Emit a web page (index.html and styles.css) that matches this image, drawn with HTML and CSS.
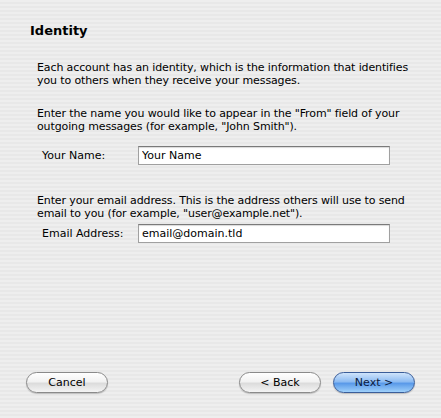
FILE: index.html
```html
<!DOCTYPE html>
<html lang="en">
<head>
    <meta charset="UTF-8">
    <title>Identity</title>
    <link rel="stylesheet" href="styles.css">
</head>
<body>

    <div class="wizard">

        <!-- Page Title -->
        <h1>Identity</h1>

        <!-- Page Content -->
        <div class="content">
            <p>Each account has an identity, which is the information that identifies you to others when they receive your messages.</p>

            <p>Enter the name you would like to appear in the "From" field of your outgoing messages (for example, "John Smith").</p>
            <div class="field-row">
                <label for="name">Your Name:</label>
                <input type="text" id="name" value="Your Name">
            </div>

            <p>Enter your email address. This is the address others will use to send email to you (for example, "user@example.net").</p>
            <div class="field-row field-row-tight">
                <label for="email">Email Address:</label>
                <input type="text" id="email" value="email@domain.tld">
            </div>
        </div>

        <!-- Wizard Buttons -->
        <div class="buttons">
            <button class="button">Cancel</button>
            <div class="button-group">
                <button class="button">&lt; Back</button>
                <button class="button button-default">Next &gt;</button>
            </div>
        </div>

    </div>

</body>
</html>
```

FILE: styles.css
```css
/* --- Base --- */
body {
    margin: 0;
    font-family: 'DejaVu Sans', sans-serif;
    font-size: 11px;
    color: #000;
    background-color: #ececec;
    background-image: repeating-linear-gradient(to bottom, #eeeeee 0, #eeeeee 2px, #e8e8e8 2px, #e8e8e8 4px);
}

/* --- Wizard Frame --- */
.wizard {
    height: 418px;
    display: flex;
    flex-direction: column;
    box-sizing: border-box;
    padding: 23px 26px 25px 30px;
}

h1 {
    font-size: 13px;
    font-weight: bold;
    margin: 0;
    line-height: 16px;
}

.content {
    padding: 22px 0 0 7px;
}

.content p {
    margin: 0 0 20px 0;
    line-height: 13px;
    letter-spacing: -0.12px;
}

/* --- Form Rows --- */
.field-row {
    display: flex;
    align-items: center;
    padding-left: 5px;
    margin: -7px 0 29px 0;
}

.field-row-tight {
    margin-top: -16px;
}

.field-row label {
    width: 96px;
}

.field-row input {
    width: 252px;
    height: 19px;
    box-sizing: border-box;
    font-family: inherit;
    font-size: 11px;
    padding: 0 3px;
    border: 1px solid #a0a0a0;
    border-top-color: #7a7a7a;
    background: #fff;
    box-shadow: inset 0 1px 1px rgb(0 0 0 / 0.15);
}

/* --- Buttons --- */
.buttons {
    margin-top: auto;
    display: flex;
    justify-content: space-between;
    margin-left: -4px;
}

.button-group {
    display: flex;
    gap: 12px;
}

.button {
    width: 82px;
    height: 21px;
    font-family: inherit;
    font-size: 11px;
    color: #000;
    border: 1px solid #8a8a8a;
    border-radius: 11px;
    background: linear-gradient(to bottom, #ffffff 0%, #f2f2f2 45%, #dcdcdc 55%, #f4f4f4 100%);
    box-shadow: 0 1px 1px rgb(0 0 0 / 0.2);
    padding: 0;
}

.button-default {
    border-color: #3a5d99;
    color: #0a1a40;
    background: linear-gradient(to bottom, #cfe4fb 0%, #8ebcf2 45%, #5a9ae9 55%, #9fd0fa 100%);
}
```
